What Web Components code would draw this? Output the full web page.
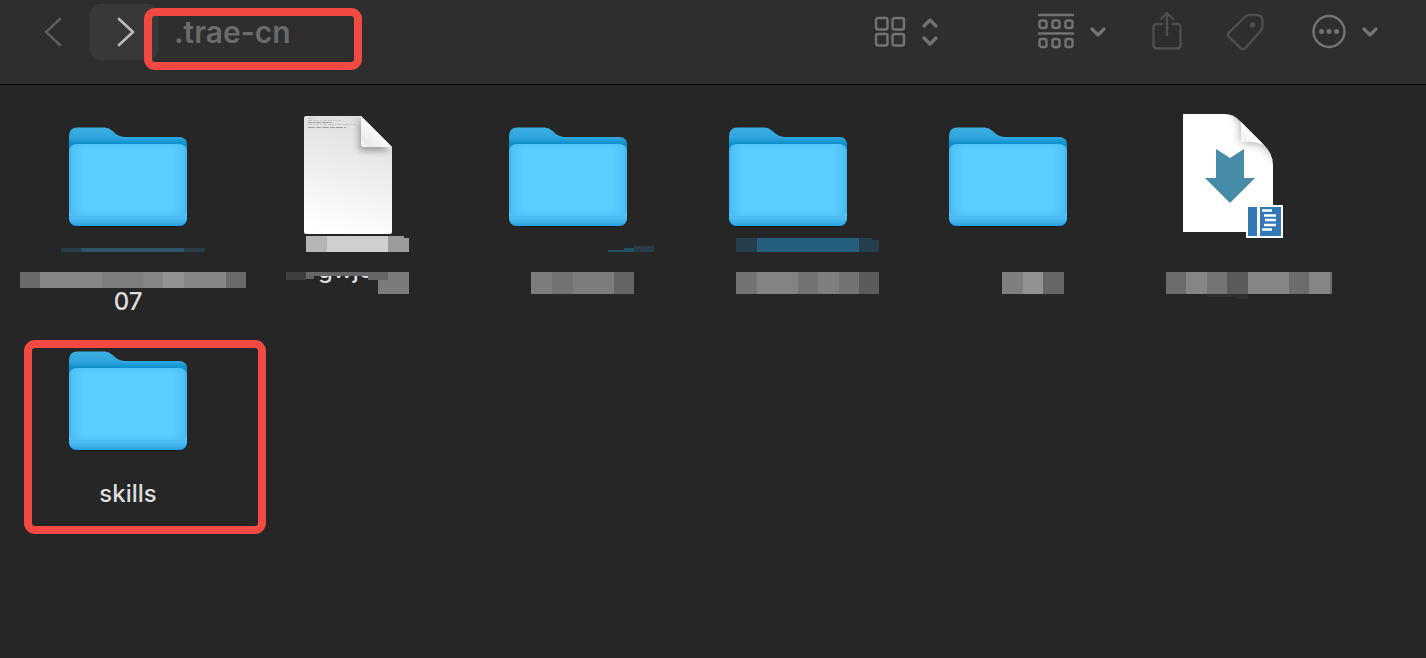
<!DOCTYPE html>
<html lang="en">
<head>
<meta charset="utf-8">
<title>.trae-cn</title>
<style>
html, body { margin: 0; min-height: 100%; background: #262626; }
body { font-family: Inter, "Noto Sans", sans-serif; color: #dedede; }
</style>
</head>
<body>
<finder-window></finder-window>
<script>
const define = (name, html) => customElements.define(name, class extends HTMLElement {
  constructor() {
    super();
    const t = document.createElement('template');
    t.innerHTML = html;
    this.attachShadow({ mode: 'open' }).append(t.content.cloneNode(true));
  }
});

/* red marker frame laid over its host's content */
define('mark-frame', `
<style>:host { position: absolute; box-sizing: border-box; border: 8px solid #f24a43; border-radius: 11px; pointer-events: none; }</style>`);

define('tool-button', `
<style>
:host { display: block; flex: none; color: #737373; }
:host([dim]) { color: #4e4e4e; }
button { all: unset; display: flex; align-items: center; gap: 15px; height: 56px; }
::slotted(svg) { display: block; overflow: visible; fill: none; stroke: currentColor; stroke-width: 2.4; stroke-linecap: round; stroke-linejoin: round; }
</style>
<button type="button"><slot></slot></button>`);

define('finder-toolbar', `
<style>
:host { display: block; background: #2e2e2e; border-bottom: 1px solid #050505; }
header { display: flex; align-items: center; padding: 4px 48px 24px 0; }
nav { display: flex; }
nav button { all: unset; box-sizing: border-box; width: 68px; height: 56px; border-radius: 10px; display: flex; align-items: center; }
.back { margin-left: 22px; padding-left: 21px; color: #5c5c5c; }
.forward { background: #383838; padding-left: 26px; color: #bcbcbc; }
nav svg { fill: none; stroke: currentColor; stroke-width: 2.6; stroke-linecap: round; stroke-linejoin: round; }
.place { position: relative; padding-left: 16px; }
h1 { margin: 0; font-size: 30px; line-height: 56px; font-weight: 600; color: #6b6b6b; }
mark-frame { left: -14px; top: 4px; width: 218px; height: 62px; }
.tools { display: flex; margin-left: auto; gap: 44px; }
.view { margin-right: 52px; }
</style>
<header>
<nav>
<button class="back" type="button" aria-label="Back"><svg width="20" height="32" viewBox="0 0 20 32"><path d="M17 3 3 16l14 13"/></svg></button>
<button class="forward" type="button" aria-label="Forward"><svg width="20" height="32" viewBox="0 0 20 32"><path d="M3 3l14 13L3 29"/></svg></button>
</nav>
<div class="place"><h1>.trae-cn</h1><mark-frame></mark-frame></div>
<div class="tools">
<tool-button class="view" title="View">
<svg width="32" height="32" viewBox="0 0 32 32"><rect x="1" y="2" width="11.500" height="11.500" rx="2"/><rect x="17.500" y="2" width="11.500" height="11.500" rx="2"/><rect x="1" y="18" width="11.500" height="11.500" rx="2"/><rect x="17.500" y="18" width="11.500" height="11.500" rx="2"/></svg>
<svg width="18" height="32" viewBox="0 0 18 32"><path stroke-width="3.2" d="M2 10l6-6 6 6M2 22l6 6 6-6"/></svg>
</tool-button>
<tool-button title="Group">
<svg width="38" height="38" viewBox="0 0 38 38"><path d="M3 2h34M3 20.500h34"/><rect x="3.500" y="7.500" width="7" height="7.500" rx="2"/><rect x="16.500" y="7.500" width="7" height="7.500" rx="2"/><rect x="29.500" y="7.500" width="7" height="7.500" rx="2"/><rect x="3.500" y="26" width="7" height="8" rx="2"/><rect x="16.500" y="26" width="7" height="8" rx="2"/><rect x="29.500" y="26" width="7" height="8" rx="2"/></svg>
<svg width="18" height="32" viewBox="0 0 18 32"><path stroke-width="3.2" d="M3 13l6 6 6-6"/></svg>
</tool-button>
<tool-button dim title="Share">
<svg width="32" height="40" viewBox="0 0 32 40"><path d="M10.500 12H6q-3.500 0-3.500 3.500V33q0 3.500 3.500 3.500h20q3.500 0 3.500-3.500V15.500q0-3.500-3.500-3.500h-4.500M16 23V1M10 7l6-6 6 6"/></svg>
</tool-button>
<tool-button dim title="Tags">
<svg width="38" height="40" viewBox="0 0 38 40"><path d="M2 20.500 18.500 4.500Q20 3 22.500 3h7q6 0 6 6v5q0 3-2 5L18 36.500q-2 2-4 0L2 25q-2-2.300 0-4.500z"/><circle cx="25.500" cy="13" r="1.500" fill="currentColor"/></svg>
</tool-button>
<tool-button title="More">
<svg width="36" height="36" viewBox="0 0 36 36"><circle cx="20" cy="17.500" r="15.500"/><g fill="currentColor" stroke="none"><circle cx="12.500" cy="17.500" r="2.500"/><circle cx="20" cy="17.500" r="2.500"/><circle cx="27.500" cy="17.500" r="2.500"/></g></svg>
<svg width="18" height="32" viewBox="0 0 18 32"><path stroke-width="3.2" d="M4 13l6 6 6-6"/></svg>
</tool-button>
</div>
</header>`);

define('folder-icon', `
<style>:host { display: block; width: 128px; height: 128px; } svg { display: block; }</style>
<svg width="128" height="128" viewBox="0 0 128 128" aria-hidden="true">
<defs>
<linearGradient id="b" x1="0" y1="0" x2="0" y2="1"><stop offset="0" stop-color="#3bade2"/><stop offset=".1" stop-color="#30a7df"/><stop offset=".17" stop-color="#0c8dcb"/><stop offset="1" stop-color="#0c8dcb"/></linearGradient>
<linearGradient id="f" x1="0" y1="0" x2="0" y2="1"><stop offset="0" stop-color="#55c7fa"/><stop offset=".1" stop-color="#5ccdff"/><stop offset=".78" stop-color="#5ccdff"/><stop offset=".88" stop-color="#54c6fa"/><stop offset=".885" stop-color="#45b6ea"/><stop offset=".9" stop-color="#4cc0f5"/><stop offset=".95" stop-color="#3eb2e8"/><stop offset="1" stop-color="#259fdb"/></linearGradient>
<linearGradient id="s"><stop offset="0" stop-color="#39ade6" stop-opacity=".8"/><stop offset=".03" stop-color="#45b8ef" stop-opacity=".5"/><stop offset=".12" stop-color="#45b8ef" stop-opacity="0"/><stop offset=".88" stop-color="#45b8ef" stop-opacity="0"/><stop offset=".97" stop-color="#45b8ef" stop-opacity=".5"/><stop offset="1" stop-color="#39ade6" stop-opacity=".8"/></linearGradient>
</defs>
<path fill="#141e24" d="M5 100h118v9q0 8-8 8H13q-8 0-8-8z"/>
<path fill="url(#b)" d="M5 26q0-8.500 8.500-8.500h27q4 0 7.500 3l4 3.500q4 3 8 3h55q8 0 8 8v72q0 9-8 9H13q-8 0-8-9z"/>
<rect x="5" y="34" width="118" height="82" rx="8" fill="url(#f)"/>
<rect x="5" y="34" width="118" height="74" rx="8" fill="url(#s)"/>
</svg>`);

define('document-icon', `
<style>:host { display: block; width: 128px; height: 128px; } svg { display: block; }</style>
<svg width="128" height="128" viewBox="0 0 128 128" aria-hidden="true">
<defs>
<linearGradient id="p" x1=".6" y1="0" x2=".4" y2="1"><stop offset="0" stop-color="#dedede"/><stop offset=".5" stop-color="#eeeeee"/><stop offset="1" stop-color="#fff"/></linearGradient>
<linearGradient id="c" x1="0" y1="1" x2=".5" y2=".5"><stop offset="0" stop-color="#fff"/><stop offset=".3" stop-color="#e9e9e9"/><stop offset="1" stop-color="#fafafa"/></linearGradient>
<filter id="d" x="-.5" y="-.5" width="2" height="2"><feGaussianBlur stdDeviation="3"/></filter>
<clipPath id="k"><path d="M22 6h55l31 31v85q0 2-2 2H22q-2 0-2-2V8q0-2 2-2z"/></clipPath>
</defs>
<g clip-path="url(#k)"><path fill="url(#p)" d="M20 6h88v118H20z"/><path fill="#777" opacity=".65" filter="url(#d)" d="M75 8v29q0 4 3 4h28z"/></g>
<path fill="url(#c)" d="M77 6l31 31H80q-3 0-3-3z"/>
<path stroke="#aaa" stroke-dasharray="4 1 6 1 2 1" opacity=".5" d="M24 8.500h6M24 10.500h33M24 14.500h47"/><path stroke="#777" stroke-dasharray="7 1 5 1" opacity=".6" d="M24 17.500h38M24 12.500h24"/>
</svg>`);

define('download-icon', `
<style>:host { display: block; width: 128px; height: 128px; } svg { display: block; }</style>
<svg width="128" height="128" viewBox="0 0 128 128" aria-hidden="true">
<defs>
<linearGradient id="c" x1="0" y1="1" x2=".5" y2=".5"><stop offset="0" stop-color="#fff"/><stop offset=".4" stop-color="#f2f2f2"/><stop offset="1" stop-color="#fff"/></linearGradient>
<filter id="d" x="-.5" y="-.5" width="2" height="2"><feGaussianBlur stdDeviation="5"/></filter>
<clipPath id="k"><path d="M19 4h42q8 0 14 6l25 25q9 9 9 20v67H19z"/></clipPath>
</defs>
<g clip-path="url(#k)"><path fill="#fff" d="M19 4h90v118H19z"/><path fill="#777" opacity=".7" filter="url(#d)" d="M66 0l11 12v20l22 2 14 16V0z"/><path fill="url(#c)" d="M75 7q2 3 2 8v17q12-1 23 3z"/></g>
<path fill="#468ca7" d="M52 39l14 9 14-9v29h11L66 93 41 68h11z"/>
<path fill="#fff" d="M82 95h37v33H82z"/><path fill="#3379b7" d="M84 97h9v29h-9zM96 97h21v29H96z"/>
<path stroke="#fff" stroke-width="2.500" d="M98 100.500h10M100 105.500h12M101 110h11M100 115h12M98 119.500h10"/>
</svg>`);

/* file tile: icon, pixelated name strip, readable name */
define('file-tile', `
<style>
:host { display: flex; flex-direction: column; align-items: center; position: relative; height: 224px; }
.cover { height: 48px; align-self: stretch; }
.cover ::slotted(svg) { display: block; overflow: visible; }
.name { font-size: 24px; line-height: 32px; font-weight: 500; color: #dedede; }
:host([plain]) .cover { height: 16px; }
</style>
<slot name="icon"></slot>
<div class="cover"><slot name="cover"></slot></div>
<div class="name"><slot></slot></div>
<slot name="mark"></slot>`);

define('finder-window', `
<style>
:host { display: block; }
main { display: grid; grid-template-columns: repeat(auto-fill, 220px); padding: 25px 0 0 18px; }
.skills { left: 6px; top: 6px; width: 242px; height: 194px; }
.hidden-name { font-size: 24px; font-weight: 500; fill: #dedede; }
</style>
<finder-toolbar></finder-toolbar>
<main>
<file-tile><folder-icon slot="icon"></folder-icon>
<svg slot="cover" width="220" height="48"><path fill="#263c47" d="M43 10h144v4H43z"/><path fill="#2b566c" d="M63 10h103v4H63z"/><path fill="#6b6b6b" d="M2 34h226v16H2z"/><path fill="#868686" d="M22 34h186v16H22z"/><path fill="#7e7e7e" d="M84 34h41v16H84z"/><path fill="#929292" d="M145 34h21v16h-21z"/></svg>07</file-tile>
<file-tile><document-icon slot="icon"></document-icon>
<svg slot="cover" width="220" height="48"><defs><clipPath id="low"><path d="M80 38h50v12H80z"/></clipPath></defs><path fill="#b5b5b5" d="M68 -2h98v2h5v14H68z"/><path fill="#cfcfcf" d="M89 -2h61v16H89z"/><path fill="#9b9b9b" d="M150 -2h16v2h5v14h-21z"/><path fill="#3f3f3f" d="M48 34h20v8H48z"/><path fill="#666" d="M68 34h103v22h-31V42h-10v-4H76v3h-8z"/><path fill="#7b7b7b" d="M150 34h21v22h-31V42h10z"/><text class="hidden-name" x="80" y="40" clip-path="url(#low)">gwjc</text></svg></file-tile>
<file-tile><folder-icon slot="icon"></folder-icon>
<svg slot="cover" width="220" height="48"><path fill="#245065" d="M150 12h16v-2h10v4h-26z"/><path fill="#263d49" d="M176 8h20v6h-20z"/><path fill="#7c7c7c" d="M73 34h103v22H73z"/><path fill="#727272" d="M94 34h21v22H94z"/><path fill="#656565" d="M156 34h20v22h-20z"/></svg></file-tile>
<file-tile><folder-icon slot="icon"></folder-icon>
<svg slot="cover" width="220" height="48"><path fill="#253f4c" d="M58 0h136v2h7v12H58z"/><path fill="#245f7d" d="M79 0h102v14H79z"/><path fill="#737373" d="M58 34h143v22H58z"/><path fill="#838383" d="M79 34h41v22H79z"/><path fill="#7e7e7e" d="M140 34h21v22h-21z"/><path fill="#5b5b5b" d="M181 34h20v22h-20z"/></svg></file-tile>
<file-tile><folder-icon slot="icon"></folder-icon>
<svg slot="cover" width="220" height="48"><path fill="#7f7f7f" d="M104 34h21v22h-21z"/><path fill="#929292" d="M125 34h20v22h-20z"/><path fill="#676767" d="M145 34h21v22h-21z"/></svg></file-tile>
<file-tile><download-icon slot="icon"></download-icon>
<svg slot="cover" width="220" height="48"><path fill="#2f2f2f" d="M89 56h41v5h-12v-2H89z"/><path fill="#6c6c6c" d="M48 34h166v22H48z"/><path fill="#858585" d="M68 34h21v22H68zM130 34h41v22h-41zM191 34h21v22h-21z"/><path fill="#757575" d="M89 34h20v22H89z"/><path fill="#5b5b5b" d="M109 34h21v22h-21z"/></svg></file-tile>
<file-tile plain><folder-icon slot="icon"></folder-icon>skills<mark-frame slot="mark" class="skills"></mark-frame></file-tile>
</main>`);
</script>
</body>
</html>
